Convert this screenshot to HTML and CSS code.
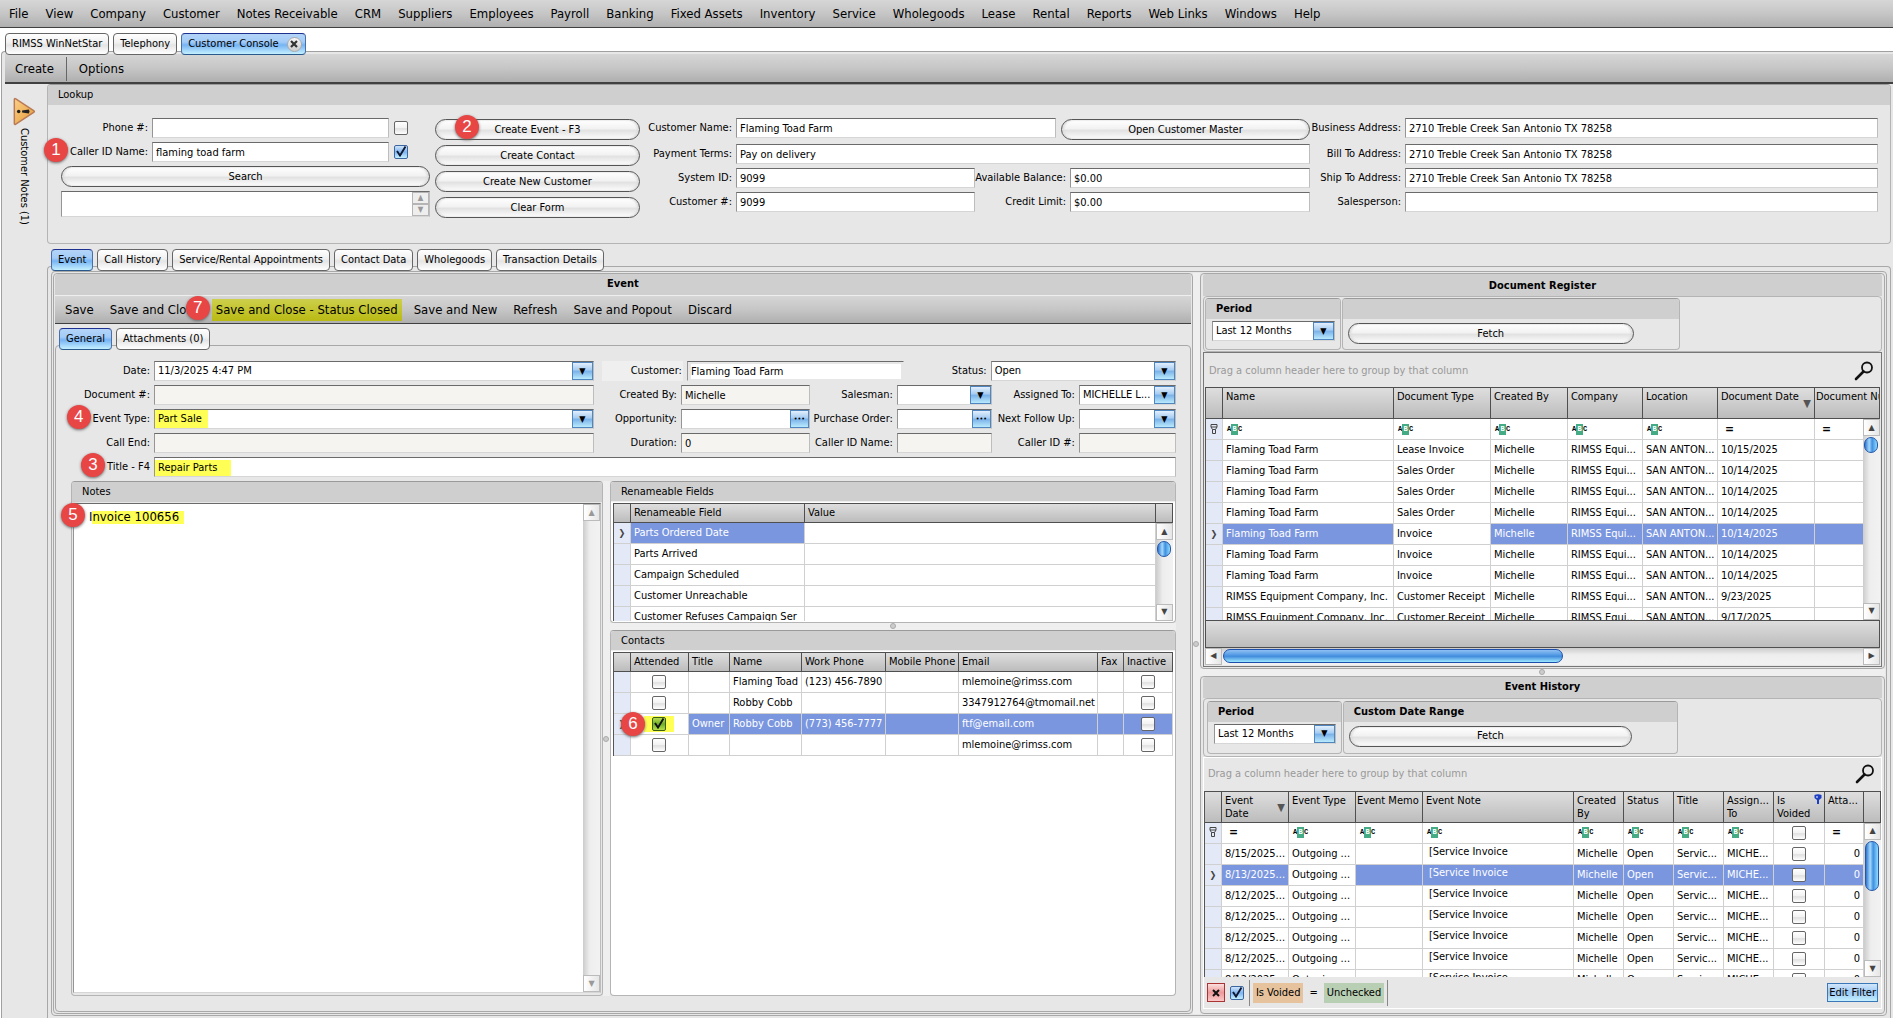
FILE: index.html
```html
<!DOCTYPE html>
<html lang="en">
<head>
<meta charset="utf-8">
<title>Customer Console</title>
<link rel="stylesheet" href="styles.css">
</head>
<body>
<svg class="defs" aria-hidden="true">
  <symbol id="search" viewBox="0 0 20 20"><circle cx="13" cy="6.500" r="5" fill="none" stroke="#111" stroke-width="1.800"/><path d="M9.500 10.500 2 18" stroke="#111" stroke-width="2.600" stroke-linecap="round"/></symbol>
  <symbol id="funnel" viewBox="0 0 8 11"><path d="M1 .5h6v2.500L5.500 5.500v4h-3v-4L1 3zM1 3h6M2.500 5.500h3" fill="none" stroke="currentColor"/></symbol>
  <symbol id="funnel-on" viewBox="0 0 8 11"><path d="M.5 1Q4-.5 7.500 1v3L5 6v4H3V6L.5 4z" fill="#1c3fc4"/><path d="M2 3h2" stroke="#fff"/></symbol>
</svg>

<nav class="menu bar">
  <button>File</button><button>View</button><button>Company</button><button>Customer</button><button>Notes Receivable</button><button>CRM</button><button>Suppliers</button><button>Employees</button><button>Payroll</button><button>Banking</button><button>Fixed Assets</button><button>Inventory</button><button>Service</button><button>Wholegoods</button><button>Lease</button><button>Rental</button><button>Reports</button><button>Web Links</button><button>Windows</button><button>Help</button>
</nav>

<div class="tabs doc-tabs">
  <button class="tab">RIMSS WinNetStar</button>
  <button class="tab">Telephony</button>
  <button class="tab active">Customer Console <span class="close"><svg viewBox="0 0 8 8"><path d="M1 1l6 6M7 1L1 7" stroke="#333" stroke-width="2.200"/></svg></span></button>
</div>

<div class="workspace">
  <div class="bar actions"><button>Create</button><span class="divider"></span><button>Options</button></div>
  <div class="work-row">
    <aside class="strip">
      <svg class="warn" viewBox="0 0 24 30"><defs><linearGradient id="wg" x1="0" x2="1" y1="0" y2="1"><stop offset="0" stop-color="#fbd08a"/><stop offset="1" stop-color="#e59a35"/></linearGradient></defs><path d="M2 2.500Q2 1 3.500 2L22 14q1.500 1 0 2L3.500 28Q2 29 2 27.500z" fill="url(#wg)" stroke="#b97a55" stroke-width="1.500"/><circle cx="6.500" cy="15" r="1.800" fill="#222"/><path d="M10 14l7-1q1.500 2 0 4l-7-1z" fill="#222"/></svg>
      <span>Customer Notes (1)</span>
    </aside>

    <main class="content">
      <section class="group lookup">
        <h2 class="cap">Lookup</h2>
        <div class="lookup-body">
          <div class="finder">
            <label for="phone">Phone #:</label><input class="field" id="phone"><input type="checkbox" aria-label="Use phone">
            <label for="cid"><span class="anchor"><span class="badge before">1</span>Caller ID Name:</span></label><input class="field" id="cid" value="flaming toad farm"><input type="checkbox" checked aria-label="Use caller name">
            <button class="pill wide">Search</button>
            <div class="result wide"><span class="spin"><button aria-label="Previous">▲</button><button aria-label="Next">▼</button></span></div>
          </div>
          <div class="commands">
            <button class="pill anchor"><span class="badge in-pill">2</span>Create Event - F3</button>
            <button class="pill">Create Contact</button>
            <button class="pill">Create New Customer</button>
            <button class="pill">Clear Form</button>
          </div>
          <div class="customer">
            <label for="cname">Customer Name:</label>
            <div class="name-row"><input class="field" id="cname" value="Flaming Toad Farm"><button class="pill">Open Customer Master</button></div>
            <label for="baddr">Business Address:</label><input class="field" id="baddr" value="2710 Treble Creek San Antonio TX 78258">
            <label for="terms">Payment Terms:</label><input class="field span3" id="terms" value="Pay on delivery">
            <label for="bill">Bill To Address:</label><input class="field" id="bill" value="2710 Treble Creek San Antonio TX 78258">
            <label for="sysid">System ID:</label><input class="field" id="sysid" value="9099">
            <label for="avail">Available Balance:</label><input class="field" id="avail" value="$0.00">
            <label for="ship">Ship To Address:</label><input class="field" id="ship" value="2710 Treble Creek San Antonio TX 78258">
            <label for="custno">Customer #:</label><input class="field" id="custno" value="9099">
            <label for="credit">Credit Limit:</label><input class="field" id="credit" value="$0.00">
            <label for="sales">Salesperson:</label><input class="field" id="sales">
          </div>
        </div>
      </section>

      <div class="tabs section-tabs">
        <button class="tab active">Event</button><button class="tab">Call History</button><button class="tab">Service/Rental Appointments</button><button class="tab">Contact Data</button><button class="tab">Wholegoods</button><button class="tab">Transaction Details</button>
      </div>

      <div class="frame">
      <div class="frame-in">
        <section class="panel event">
          <h2 class="title">Event</h2>
          <div class="bar tools">
            <button>Save</button><button>Save and Close</button><button class="marked anchor"><span class="badge before">7</span>Save and Close - Status Closed</button><button>Save and New</button><button>Refresh</button><button>Save and Popout</button><button>Discard</button>
          </div>
          <div class="tabs event-tabs"><button class="tab active">General</button><button class="tab">Attachments (0)</button></div>
          <div class="general">
            <div class="form">
              <label for="date">Date:</label><span class="combo"><select id="date"><option>11/3/2025 4:47 PM</option></select></span>
              <div class="first-row">
                <label class="tinted" for="cust">Customer:</label><span class="field inset"><input id="cust" value="Flaming Toad Farm"></span>
                <label for="status">Status:</label><span class="combo"><select id="status"><option>Open</option></select></span>
              </div>
              <label for="docno">Document #:</label><input class="field" id="docno" readonly>
              <label for="by">Created By:</label><input class="field" id="by" value="Michelle" readonly>
              <label for="sman">Salesman:</label><span class="combo"><select id="sman"><option></option></select></span>
              <label for="assign">Assigned To:</label><span class="combo"><select id="assign"><option>MICHELLE L...</option></select></span>
              <label for="etype"><span class="anchor"><span class="badge before">4</span>Event Type:</span></label><span class="combo hl-type"><select id="etype"><option>Part Sale</option></select></span>
              <label for="opp">Opportunity:</label><span class="lookup-box"><input id="opp"><button aria-label="Find opportunity">•••</button></span>
              <label for="po">Purchase Order:</label><span class="lookup-box"><input id="po"><button aria-label="Find purchase order">•••</button></span>
              <label for="next">Next Follow Up:</label><span class="combo"><select id="next"><option></option></select></span>
              <label for="cend">Call End:</label><input class="field" id="cend" readonly>
              <label for="dur">Duration:</label><input class="field" id="dur" value="0" readonly>
              <label for="cidn">Caller ID Name:</label><input class="field" id="cidn" readonly>
              <label for="cidno">Caller ID #:</label><input class="field" id="cidno" readonly>
              <label for="ttl"><span class="anchor"><span class="badge before">3</span>Title - F4</span></label><input class="field hl-title" id="ttl" value="Repair Parts">
            </div>
            <div class="boxes">
              <section class="group notes">
                <span class="badge corner">5</span>
                <h3 class="cap"><label for="notes">Notes</label></h3>
                <div class="notes-body"><textarea id="notes">Invoice 100656</textarea><div class="vscroll off"><i>▲</i><i>▼</i></div></div>
              </section>
              <div class="vsplit"></div>
              <div class="stack">
                <section class="group fields">
                  <h3 class="cap">Renameable Fields</h3>
                  <div class="grid-wrap">
                    <table class="grid">
                      <colgroup><col class="w17"><col class="w174"><col><col class="w17"></colgroup>
                      <thead><tr><th></th><th>Renameable Field</th><th>Value</th><th></th></tr></thead>
                      <tbody>
                        <tr><td class="ind">❯</td><td class="sel">Parts Ordered Date</td><td></td><td></td></tr>
                        <tr><td class="ind"></td><td>Parts Arrived</td><td></td><td></td></tr>
                        <tr><td class="ind"></td><td>Campaign Scheduled</td><td></td><td></td></tr>
                        <tr><td class="ind"></td><td>Customer Unreachable</td><td></td><td></td></tr>
                        <tr><td class="ind"></td><td>Customer Refuses Campaign Ser</td><td></td><td></td></tr>
                      </tbody>
                    </table>
                    <div class="vscroll over"><i>▲</i><b class="ball"></b><i>▼</i></div>
                  </div>
                </section>
                <div class="hsplit"></div>
                <section class="group contacts">
                  <h3 class="cap">Contacts</h3>
                  <div class="grid-wrap">
                    <table class="grid">
                      <colgroup><col class="w17"><col class="w58"><col class="w41"><col class="w72"><col class="w84"><col class="w73"><col><col class="w26"><col class="w49"></colgroup>
                      <thead><tr><th></th><th>Attended</th><th>Title</th><th>Name</th><th>Work Phone</th><th>Mobile Phone</th><th>Email</th><th>Fax</th><th>Inactive</th></tr></thead>
                      <tbody>
                        <tr><td class="ind"></td><td class="c"><input type="checkbox" aria-label="Attended"></td><td></td><td>Flaming Toad</td><td>(123) 456-7890</td><td></td><td>mlemoine@rimss.com</td><td></td><td class="c"><input type="checkbox" aria-label="Inactive"></td></tr>
                        <tr><td class="ind"></td><td class="c"><input type="checkbox" aria-label="Attended"></td><td></td><td>Robby Cobb</td><td></td><td></td><td>3347912764@tmomail.net</td><td></td><td class="c"><input type="checkbox" aria-label="Inactive"></td></tr>
                        <tr class="sel"><td class="ind">❯</td><td class="c plain anchor"><span class="badge on-edge">6</span><span class="hl-check"><input type="checkbox" checked aria-label="Attended"></span></td><td>Owner</td><td>Robby Cobb</td><td>(773) 456-7777</td><td></td><td>ftf@email.com</td><td></td><td class="c"><input type="checkbox" aria-label="Inactive"></td></tr>
                        <tr><td class="ind"></td><td class="c"><input type="checkbox" aria-label="Attended"></td><td></td><td></td><td></td><td></td><td>mlemoine@rimss.com</td><td></td><td class="c"><input type="checkbox" aria-label="Inactive"></td></tr>
                      </tbody>
                    </table>
                  </div>
                </section>
              </div>
            </div>
          </div>
        </section>

        <div class="vsplit"></div>

        <div class="side">
          <section class="panel register">
            <h2 class="title">Document Register</h2>
            <div class="criteria">
              <div class="group period"><h3 class="cap">Period</h3><span class="combo"><select aria-label="Register period"><option>Last 12 Months</option></select></span></div>
              <div class="group fetch"><h3 class="cap">&nbsp;</h3><button class="pill">Fetch</button></div>
            </div>
            <div class="sheet">
              <div class="group-by"><span>Drag a column header here to group by that column</span><svg><use href="#search"/></svg></div>
              <div class="grid-wrap">
                <table class="grid tall">
                  <colgroup><col class="w17"><col class="w171"><col class="w97"><col class="w77"><col class="w75"><col class="w75"><col class="w97"><col></colgroup>
                  <thead><tr><th></th><th>Name</th><th>Document Type</th><th>Created By</th><th>Company</th><th>Location</th><th class="sorted">Document Date</th><th class="cut">Document Nu</th></tr></thead>
                  <tbody>
                    <tr><td class="ind"><svg><use href="#funnel"/></svg></td><td><span class="abc">A<b>B</b>C</span></td><td><span class="abc">A<b>B</b>C</span></td><td><span class="abc">A<b>B</b>C</span></td><td><span class="abc">A<b>B</b>C</span></td><td><span class="abc">A<b>B</b>C</span></td><td><b class="eq">=</b></td><td><b class="eq">=</b></td></tr>
                    <tr><td class="ind"></td><td>Flaming Toad Farm</td><td>Lease Invoice</td><td>Michelle</td><td>RIMSS Equi...</td><td>SAN ANTON...</td><td>10/15/2025</td><td></td></tr>
                    <tr><td class="ind"></td><td>Flaming Toad Farm</td><td>Sales Order</td><td>Michelle</td><td>RIMSS Equi...</td><td>SAN ANTON...</td><td>10/14/2025</td><td></td></tr>
                    <tr><td class="ind"></td><td>Flaming Toad Farm</td><td>Sales Order</td><td>Michelle</td><td>RIMSS Equi...</td><td>SAN ANTON...</td><td>10/14/2025</td><td></td></tr>
                    <tr><td class="ind"></td><td>Flaming Toad Farm</td><td>Sales Order</td><td>Michelle</td><td>RIMSS Equi...</td><td>SAN ANTON...</td><td>10/14/2025</td><td></td></tr>
                    <tr class="sel"><td class="ind">❯</td><td>Flaming Toad Farm</td><td class="plain">Invoice</td><td>Michelle</td><td>RIMSS Equi...</td><td>SAN ANTON...</td><td>10/14/2025</td><td></td></tr>
                    <tr><td class="ind"></td><td>Flaming Toad Farm</td><td>Invoice</td><td>Michelle</td><td>RIMSS Equi...</td><td>SAN ANTON...</td><td>10/14/2025</td><td></td></tr>
                    <tr><td class="ind"></td><td>Flaming Toad Farm</td><td>Invoice</td><td>Michelle</td><td>RIMSS Equi...</td><td>SAN ANTON...</td><td>10/14/2025</td><td></td></tr>
                    <tr><td class="ind"></td><td>RIMSS Equipment Company, Inc.</td><td>Customer Receipt</td><td>Michelle</td><td>RIMSS Equi...</td><td>SAN ANTON...</td><td>9/23/2025</td><td></td></tr>
                    <tr><td class="ind"></td><td>RIMSS Equipment Company, Inc.</td><td>Customer Receipt</td><td>Michelle</td><td>RIMSS Equi...</td><td>SAN ANTON...</td><td>9/17/2025</td><td></td></tr>
                  </tbody>
                </table>
                <div class="vscroll over"><i>▲</i><b class="ball"></b><i>▼</i></div>
              </div>
              <div class="summary"></div>
              <div class="hscroll"><i>◀</i><span class="track"><b></b></span><i>▶</i></div>
            </div>
          </section>

          <div class="hsplit"></div>

          <section class="panel history">
            <h2 class="title">Event History</h2>
            <div class="criteria">
              <div class="group period"><h3 class="cap">Period</h3><span class="combo"><select aria-label="History period"><option>Last 12 Months</option></select></span></div>
              <div class="group fetch"><h3 class="cap">Custom Date Range</h3><button class="pill">Fetch</button></div>
            </div>
            <div class="sheet light">
              <div class="group-by"><span>Drag a column header here to group by that column</span><svg><use href="#search"/></svg></div>
              <div class="grid-wrap">
                <table class="grid tall">
                  <colgroup><col class="w17"><col class="w67"><col class="w67"><col class="w67"><col><col class="w50"><col class="w50"><col class="w50"><col class="w50"><col class="w51"><col class="w39"><col class="w17"></colgroup>
                  <thead><tr><th></th><th class="sorted">Event<br>Date</th><th>Event Type</th><th class="cut">Event Memo</th><th>Event Note</th><th>Created<br>By</th><th>Status</th><th>Title</th><th>Assign...<br>To</th><th class="filtered">Is<br>Voided<svg><use href="#funnel-on"/></svg></th><th>Atta...</th><th></th></tr></thead>
                  <tbody>
                    <tr><td class="ind"><svg><use href="#funnel"/></svg></td><td><b class="eq">=</b></td><td><span class="abc">A<b>B</b>C</span></td><td><span class="abc">A<b>B</b>C</span></td><td><span class="abc">A<b>B</b>C</span></td><td><span class="abc">A<b>B</b>C</span></td><td><span class="abc">A<b>B</b>C</span></td><td><span class="abc">A<b>B</b>C</span></td><td><span class="abc">A<b>B</b>C</span></td><td class="c"><input type="checkbox" aria-label="Filter voided"></td><td><b class="eq">=</b></td><td></td></tr>
                    <tr><td class="ind"></td><td>8/15/2025...</td><td>Outgoing ...</td><td></td><td class="note">[Service Invoice</td><td>Michelle</td><td>Open</td><td>Servic...</td><td>MICHE...</td><td class="c"><input type="checkbox" aria-label="Voided"></td><td class="r">0</td><td></td></tr>
                    <tr class="sel"><td class="ind">❯</td><td>8/13/2025...</td><td class="plain">Outgoing ...</td><td></td><td class="note">[Service Invoice</td><td>Michelle</td><td>Open</td><td>Servic...</td><td>MICHE...</td><td class="c"><input type="checkbox" aria-label="Voided"></td><td class="r">0</td><td></td></tr>
                    <tr><td class="ind"></td><td>8/12/2025...</td><td>Outgoing ...</td><td></td><td class="note">[Service Invoice</td><td>Michelle</td><td>Open</td><td>Servic...</td><td>MICHE...</td><td class="c"><input type="checkbox" aria-label="Voided"></td><td class="r">0</td><td></td></tr>
                    <tr><td class="ind"></td><td>8/12/2025...</td><td>Outgoing ...</td><td></td><td class="note">[Service Invoice</td><td>Michelle</td><td>Open</td><td>Servic...</td><td>MICHE...</td><td class="c"><input type="checkbox" aria-label="Voided"></td><td class="r">0</td><td></td></tr>
                    <tr><td class="ind"></td><td>8/12/2025...</td><td>Outgoing ...</td><td></td><td class="note">[Service Invoice</td><td>Michelle</td><td>Open</td><td>Servic...</td><td>MICHE...</td><td class="c"><input type="checkbox" aria-label="Voided"></td><td class="r">0</td><td></td></tr>
                    <tr><td class="ind"></td><td>8/12/2025...</td><td>Outgoing ...</td><td></td><td class="note">[Service Invoice</td><td>Michelle</td><td>Open</td><td>Servic...</td><td>MICHE...</td><td class="c"><input type="checkbox" aria-label="Voided"></td><td class="r">0</td><td></td></tr>
                    <tr><td class="ind"></td><td>8/12/2025...</td><td>Outgoing ...</td><td></td><td class="note">[Service Invoice</td><td>Michelle</td><td>Open</td><td>Servic...</td><td>MICHE...</td><td class="c"><input type="checkbox" aria-label="Voided"></td><td class="r">0</td><td></td></tr>
                  </tbody>
                </table>
                <div class="vscroll over"><i>▲</i><b class="bar-thumb"></b><i>▼</i></div>
              </div>
              <div class="filter">
                <button class="clear" aria-label="Clear filter"><svg viewBox="0 0 8 8"><path d="M1 1l6 6M7 1L1 7" stroke="#111" stroke-width="2"/></svg></button>
                <input type="checkbox" checked aria-label="Filter enabled">
                <span class="expr"><span class="tag prop">Is Voided</span><span>=</span><span class="tag val">Unchecked</span></span>
                <button class="edit">Edit Filter</button>
              </div>
            </div>
          </section>
        </div>
      </div>
      </div>
    </main>
  </div>
</div>
</body>
</html>
```
FILE: styles.css
```css
* { box-sizing: border-box; }
body {
  margin: 0;
  height: 100vh;
  display: flex;
  flex-direction: column;
  overflow: hidden;
  background: #fff;
  color: #000;
  font: 11px/14px "DejaVu Sans Condensed", "DejaVu Sans", sans-serif;
}
button, input, select, textarea { font: inherit; color: inherit; margin: 0; }
button { padding: 0; border: 0; background: none; white-space: nowrap; }
h2, h3 { margin: 0; font: inherit; }
.defs { position: absolute; width: 0; height: 0; }
.anchor { position: relative; }

/* Bars */
.bar {
  display: flex;
  align-items: center;
  flex: none;
  background: linear-gradient(#d6d6d6, #c6c6c6 50%, #afafaf);
  border-bottom: 1px solid #404040;
  font-size: 13px;
  line-height: 18px;
}
.menu { height: 28px; padding-left: 1px; }
.menu button { padding: 0 9px 0 8px; }
.actions { height: 30px; padding: 2px 0 0 10px; border-bottom-width: 2px; }
.divider { width: 1px; height: 24px; margin: 0 12px 0 12px; background: #666; }
.tools { height: 29px; padding-left: 6px; gap: 8px; border-top: 1px solid #eee; }
.tools button { padding: 2px 4px; }
.tools .marked { background: linear-gradient(#cdcf4c, #b9ba13); }

/* Tabs */
.tabs { display: flex; flex: none; gap: 4px; position: relative; }
.tab {
  display: flex;
  align-items: center;
  height: 22px;
  padding: 0 6px;
  border: 1px solid #666;
  border-radius: 4px;
  background: linear-gradient(#fff, #f0f0f0 45%, #e4e4e4 55%, #fff);
}
.tab.active {
  border-color: #1d2f8f #4a6fa8 #2a5a8c;
  background: linear-gradient(#b4d4f7, #a2ccf8 40%, #76b3f3 55%, #c4f0ff);
}
.doc-tabs { padding: 5px 0 0 5px; margin-bottom: -4px; }
.section-tabs { padding: 5px 0 0 4px; margin-bottom: -5px; }
.event-tabs { padding: 4px 0 0 4px; margin-bottom: -5px; }
.close {
  display: grid;
  place-items: center;
  width: 15px;
  height: 15px;
  margin: 0 -3px 0 8px;
  border: 1px solid #aaa;
  border-radius: 50%;
  background: linear-gradient(#f6f6f6, #ccc);
}
.close svg { width: 8px; height: 8px; }

/* Frames */
.workspace {
  flex: 1;
  min-height: 0;
  display: flex;
  flex-direction: column;
  margin-left: 1px;
  padding: 2px 0 0 3px;
  border: 1px solid #a0a0a0;
  border-width: 1px 0 0 1px;
  border-radius: 4px 0 0 0;
  background: #e7e7e7;
}
.work-row { flex: 1; min-height: 0; display: flex; }
.strip { width: 42px; display: flex; flex-direction: column; align-items: center; padding: 13px 4px 0 0; gap: 2px; flex: none; }
.strip span { writing-mode: vertical-rl; }
.warn { width: 24px; height: 29px; }
.content { flex: 1; min-width: 0; display: flex; flex-direction: column; padding-right: 2px; }
.group { border: 1px solid #b4b4b4; border-top-color: #9a9a9a; border-radius: 4px; background: #e7e7e7; }
.cap { height: 20px; padding: 3px 10px; background: #cfcfcf; border-radius: 3px 3px 0 0; }
.frame {
  flex: 1;
  min-height: 0;
  display: flex;
  border: 1px solid #a8a8a8;
  border-bottom: 0;
  border-radius: 4px 4px 0 0;
  padding: 4px 3px 2px;
}
.frame-in { flex: 1; min-width: 0; display: flex; border: 1px solid #a8a8a8; border-radius: 4px; padding: 1px; }
.panel { display: flex; flex-direction: column; min-height: 0; border: 1px solid #a8a8a8; border-radius: 4px; }
.title { height: 21px; flex: none; padding-top: 3px; background: #cfcfcf; text-align: center; font-weight: bold; border-radius: 3px 3px 0 0; }
.register .title { padding-top: 5px; height: 22px; }
.vsplit, .hsplit { display: grid; place-items: center; flex: none; background: #efefef; }
.vsplit { width: 7px; }
.hsplit { height: 7px; }
.vsplit::after, .hsplit::after { content: ""; width: 4px; height: 4px; border-radius: 50%; border: 1px solid #aaa; background: #ccc; }

/* Controls */
label { display: flex; justify-content: flex-end; align-items: center; height: 20px; padding-right: 4px; white-space: nowrap; }
.field, .combo, .lookup-box {
  display: flex;
  width: 100%;
  min-width: 0;
  height: 20px;
  padding: 0 3px;
  border: 1px solid;
  border-color: #6a6a6a #bdbdbd #d6d6d6 #959595;
  border-radius: 0;
  background: #fff;
  outline: 0;
}
.field[readonly] { background: #f5f4f0; }
.combo, .lookup-box { padding: 0; }
.combo select, .lookup-box input, .inset input {
  flex: 1;
  min-width: 0;
  appearance: none;
  border: 0;
  border-radius: 0;
  outline: 0;
  padding: 0 3px;
  background: transparent;
}
.combo::after, .lookup-box button {
  content: "▼";
  flex: none;
  display: grid;
  place-items: center;
  width: 19px;
  border: 1px solid #4f86bf;
  background: linear-gradient(#e2effc, #a5cbf2 45%, #79b0e8 50%, #b9eafd);
  font-size: 9px;
  line-height: 9px;
}
.lookup-box button { font-size: 7px; }
.inset { border-color: #6a6a6a #e7e7e7 #e7e7e7 #959595; background: #e7e7e7; padding: 2px 2px 1px 3px; }
.inset input { background: #fff; padding: 0; }
.tinted { background: #efefef; padding-right: 1px; }
.hl-type { background: linear-gradient(#ff5, #ff5) 0 0 / 53px 100% no-repeat #fff; }
.hl-title { background: linear-gradient(#ff5, #ff5) 0 2px / 76px 100% no-repeat #fff; }
.pill {
  height: 21px;
  border: 1px solid #555;
  border-radius: 11px;
  background: linear-gradient(#fff, #f2f2f2 45%, #e2e2e2 55%, #fdfdfd);
  box-shadow: inset 2px 0 2px #ddd, inset -2px 0 2px #ddd;
}
input[type="checkbox"] {
  appearance: none;
  flex: none;
  width: 14px;
  height: 14px;
  border: 1px solid #666;
  border-radius: 2px;
  background: linear-gradient(#fff, #f2f2f2 50%, #e0e0e0 55%, #fff);
}
input[type="checkbox"]:checked {
  border-color: #3c66a0;
  background:
    url("data:image/svg+xml,%3Csvg xmlns='http://www.w3.org/2000/svg' viewBox='0 0 12 12'%3E%3Cpath d='M2 5l3 4.500L10.500 .5' fill='none' stroke='%23111833' stroke-width='1.900'/%3E%3C/svg%3E") center / 12px 12px no-repeat,
    linear-gradient(#cfe4fa, #7fb4ee 50%, #c4efff);
}
.badge {
  position: absolute;
  z-index: 3;
  display: grid;
  place-items: center;
  width: 24px;
  height: 24px;
  border-radius: 50%;
  background: #e84545;
  box-shadow: 0 1px 3px #666;
  color: #fff;
  font: 17px/24px "Liberation Sans", sans-serif;
}
.before { right: 100%; top: 50%; margin: -14px 2px 0 0; }
.in-pill { left: 19px; top: -5px; }
.corner { left: -11px; top: 21px; }
.on-edge { left: -10px; top: -2px; }

/* Lookup */
.lookup { flex: none; height: 160px; }
.lookup-body { display: flex; gap: 5px; padding: 13px 12px 0 13px; }
.finder { display: grid; grid-template-columns: 91px 237px 36px; gap: 4px 0; width: 369px; flex: none; align-items: center; align-content: start; }
.finder input[type="checkbox"] { margin-left: 5px; }
.wide { grid-column: 1 / -1; width: 369px; }
.result { display: flex; justify-content: flex-end; height: 26px; border: 1px solid; border-color: #6a6a6a #bdbdbd #d6d6d6 #959595; background: #fff; }
.spin { display: flex; flex-direction: column; width: 17px; }
.spin button { flex: 1; border: 1px solid #b5b5b5; background: #eee; color: #999; font-size: 8px; line-height: 8px; }
.commands { display: flex; flex-direction: column; gap: 5px; width: 205px; flex: none; padding-top: 1px; }
.customer {
  flex: 1;
  display: grid;
  grid-template-columns: 91px minmax(0, 239fr) 95px minmax(0, 240fr) 95px minmax(0, 473fr);
  grid-template-rows: 22px 20px 20px 20px;
  row-gap: 4px;
}
.name-row { grid-column: span 3; display: flex; gap: 5px; }
.name-row .field { flex: 317 1 0; width: 0; }
.name-row .pill { flex: 251 1 0; margin-top: 1px; }
.span3 { grid-column: span 3; }

/* Event panel */
.event { flex: 1139 1 0; min-width: 0; padding: 0 1px 1px; }
.general {
  flex: 1;
  min-height: 0;
  display: flex;
  flex-direction: column;
  gap: 4px;
  padding: 15px 14px 15px 0;
  border: 1px solid #a8a8a8;
  border-radius: 4px;
}
.form {
  display: grid;
  flex: none;
  grid-template-columns: 98px minmax(0, 440fr) 87px minmax(0, 129fr) 87px minmax(0, 95fr) 87px minmax(0, 97fr);
  row-gap: 4px;
}
.first-row { grid-column: span 6; display: flex; }
.first-row .tinted { width: 81px; margin: 0 4px 0 8px; }
.first-row .field { flex: 214 1 0; }
.first-row label:not(.tinted) { width: 87px; }
.first-row .combo { flex: 187 1 0; }
.hl-title { grid-column: span 7; }
.boxes { flex: 1; min-height: 0; display: flex; padding-left: 15px; }
.notes { flex: 531 1 0; display: flex; flex-direction: column; position: relative; }
.notes .cap label { height: auto; padding: 0; justify-content: flex-start; }
.notes-body { flex: 1; display: flex; margin: 1px 1px 2px 1px; border: 1px solid; border-color: #6a6a6a #bdbdbd #d6d6d6 #959595; background: #fff; }
.notes textarea {
  flex: 1;
  min-width: 0;
  resize: none;
  border: 0;
  outline: 0;
  padding: 5px 15px;
  background: linear-gradient(#ff5, #ff5) 18px 7px / 92px 13px no-repeat #fff;
  font-size: 13px;
  line-height: 16px;
}
.stack { flex: 567 1 0; min-width: 0; display: flex; flex-direction: column; }
.fields, .contacts { display: flex; flex-direction: column; min-height: 0; background: #fff; padding-bottom: 1px; }
.fields { flex: 140 1 0; }
.contacts { flex: 367 1 0; }
.fields .cap, .contacts .cap { height: 20px; flex: none; border-bottom: 1px solid #eee; }
.fields .grid-wrap, .contacts .grid-wrap { margin: 1px 2px 0; }

/* Grids */
.grid-wrap { position: relative; flex: 1; min-height: 0; overflow: hidden; background: #fff; }
.grid { width: 100%; table-layout: fixed; border-collapse: separate; border-spacing: 0; border-left: 1px solid #555; }
.grid th {
  height: 20px;
  padding: 0 3px;
  border: 1px solid #4f4f4f;
  border-left: 0;
  background: linear-gradient(#dedede, #bcbcbc);
  font-weight: normal;
  text-align: left;
  white-space: nowrap;
  overflow: hidden;
}
.grid.tall th { height: 32px; vertical-align: top; padding-top: 2px; position: relative; line-height: 13px; }
.grid .cut { padding: 0 1px; }
.grid td {
  height: 21px;
  padding: 0 3px;
  border: 1px solid #d0d0d0;
  border-width: 0 1px 1px 0;
  white-space: nowrap;
  overflow: hidden;
}
.grid .ind { background: #e3e9f6; padding: 0; text-align: center; font-size: 9px; color: #444; }
.ind svg { display: block; width: 8px; height: 11px; margin: auto; }
.grid .c { text-align: center; padding: 0; overflow: visible; }
.grid .c input { display: block; margin: 0 auto; }
.grid .r { text-align: right; }
.grid .note { padding: 0 0 4px 6px; }
.grid td.sel, .sel td:not(.ind):not(.plain) { background: #7a96df; color: #fff; }
.w17 { width: 17px; } .w26 { width: 26px; } .w39 { width: 39px; } .w41 { width: 41px; }
.w49 { width: 49px; } .w50 { width: 50px; } .w51 { width: 51px; } .w58 { width: 58px; }
.w67 { width: 67px; } .w72 { width: 72px; } .w73 { width: 73px; } .w75 { width: 75px; }
.w77 { width: 77px; } .w84 { width: 84px; } .w97 { width: 97px; } .w171 { width: 171px; } .w174 { width: 174px; }
.sorted::after { content: "▼"; position: absolute; right: 3px; top: 9px; color: #555; font-size: 11px; }
.filtered svg { position: absolute; right: 2px; top: 2px; width: 8px; height: 11px; }
.hl-check { display: block; width: 30px; margin: 0 auto; padding: 1px 7px; background: #ff5; }
.hl-check input[type="checkbox"]:checked {
  border-color: #3a5d14;
  background:
    url("data:image/svg+xml,%3Csvg xmlns='http://www.w3.org/2000/svg' viewBox='0 0 12 12'%3E%3Cpath d='M2 5l3 4.500L10.500 .5' fill='none' stroke='%23111' stroke-width='1.900'/%3E%3C/svg%3E") center / 12px 12px no-repeat,
    linear-gradient(#b4dc50, #6fae27 50%, #b6e04a);
}
.abc { display: flex; align-items: center; margin-left: 1px; font: bold 7px/11px "Liberation Mono", monospace; }
.abc b { width: 7px; background: #45ab84; color: #fff; text-align: center; }
.eq { margin-left: 4px; font-size: 12px; }

/* Scroll bars */
.vscroll { display: flex; flex-direction: column; width: 17px; background: linear-gradient(90deg, #ccc, #eee 40%, #f2f2f2); }
.vscroll i, .hscroll i {
  display: grid;
  place-items: center;
  flex: none;
  width: 17px;
  height: 17px;
  border: 1px solid #bbb;
  background: linear-gradient(90deg, #fff, #e6e6e6);
  font: 8px/8px "DejaVu Sans", sans-serif;
  color: #444;
}
.vscroll.off i { color: #999; }
.vscroll i:last-child { margin-top: auto; }
.over { position: absolute; right: 0; top: 20px; bottom: 0; }
.tall + .over { top: 32px; }
.ball, .bar-thumb { width: 14px; height: 16px; margin: 1px 0 0 1px; border: 1px solid #2457a8; border-radius: 8px; background: linear-gradient(90deg, #2e76d2, #a6d8fb 35%, #3f8fe2 60%, #8fdcff); }
.bar-thumb { height: 50px; }
.summary { height: 28px; flex: none; border: 1px solid #4f4f4f; background: linear-gradient(#dedede, #bcbcbc); }
.hscroll { display: flex; flex: none; height: 17px; background: linear-gradient(#ccc, #eee 40%, #f2f2f2); }
.track { flex: 1; display: flex; align-items: center; }
.track b { width: 53%; height: 14px; margin-left: 1px; border: 1px solid #1c4fae; border-radius: 7px; background: linear-gradient(#8fc0f2, #4f97e3 45%, #3d86db 50%, #9be8ff); }

/* Right side */
.side { flex: 687 1 0; min-width: 0; display: flex; flex-direction: column; }
.register { flex: 397 1 0; padding: 0 2px 1px; }
.history { flex: 336 1 0; padding: 0 2px 4px; }
.criteria { display: flex; flex: none; gap: 1px; height: 56px; padding: 1px; border: 1px solid #b4b4b4; border-radius: 4px; }
.history .criteria { height: 59px; padding: 2px 3px; }
.criteria .cap { font-weight: bold; height: 20px; }
.period { flex: 136 1 0; }
.fetch { flex: 341 1 0; margin-right: 200px; }
.period .combo { width: auto; margin: 2px 5px 0 6px; }
.fetch .pill { display: block; width: 85%; margin: 4px 0 0 5px; }
.sheet { flex: 1; min-height: 0; display: flex; flex-direction: column; padding: 1px; border: 1px solid #777; background: #e7e7e7; }
.sheet.light { border-color: #fff; padding: 0; }
.group-by { display: flex; justify-content: space-between; align-items: center; height: 33px; flex: none; padding: 0 6px 0 4px; color: #999; }
.group-by svg { width: 20px; height: 20px; }
.filter { display: flex; align-items: center; flex: none; gap: 5px; height: 31px; padding: 0 3px; }
.clear { display: grid; place-items: center; width: 18px; height: 19px; border: 1px solid #a33; background: linear-gradient(#fbdede, #ee9a9a 50%, #fbc8c8); }
.clear svg { width: 8px; height: 8px; }
.expr { display: flex; align-items: center; gap: 6px; padding: 3px; border: 1px solid #888; border-width: 0 1px; }
.tag { padding: 3px 3px; }
.prop { background: #e6c39d; }
.val { background: #b9cfb4; }
.edit { margin-left: auto; height: 19px; padding: 0 1px; border: 1px solid #3c78b8; background: linear-gradient(#d2e6fb, #9cc8f4 50%, #c4f0ff); }
```
